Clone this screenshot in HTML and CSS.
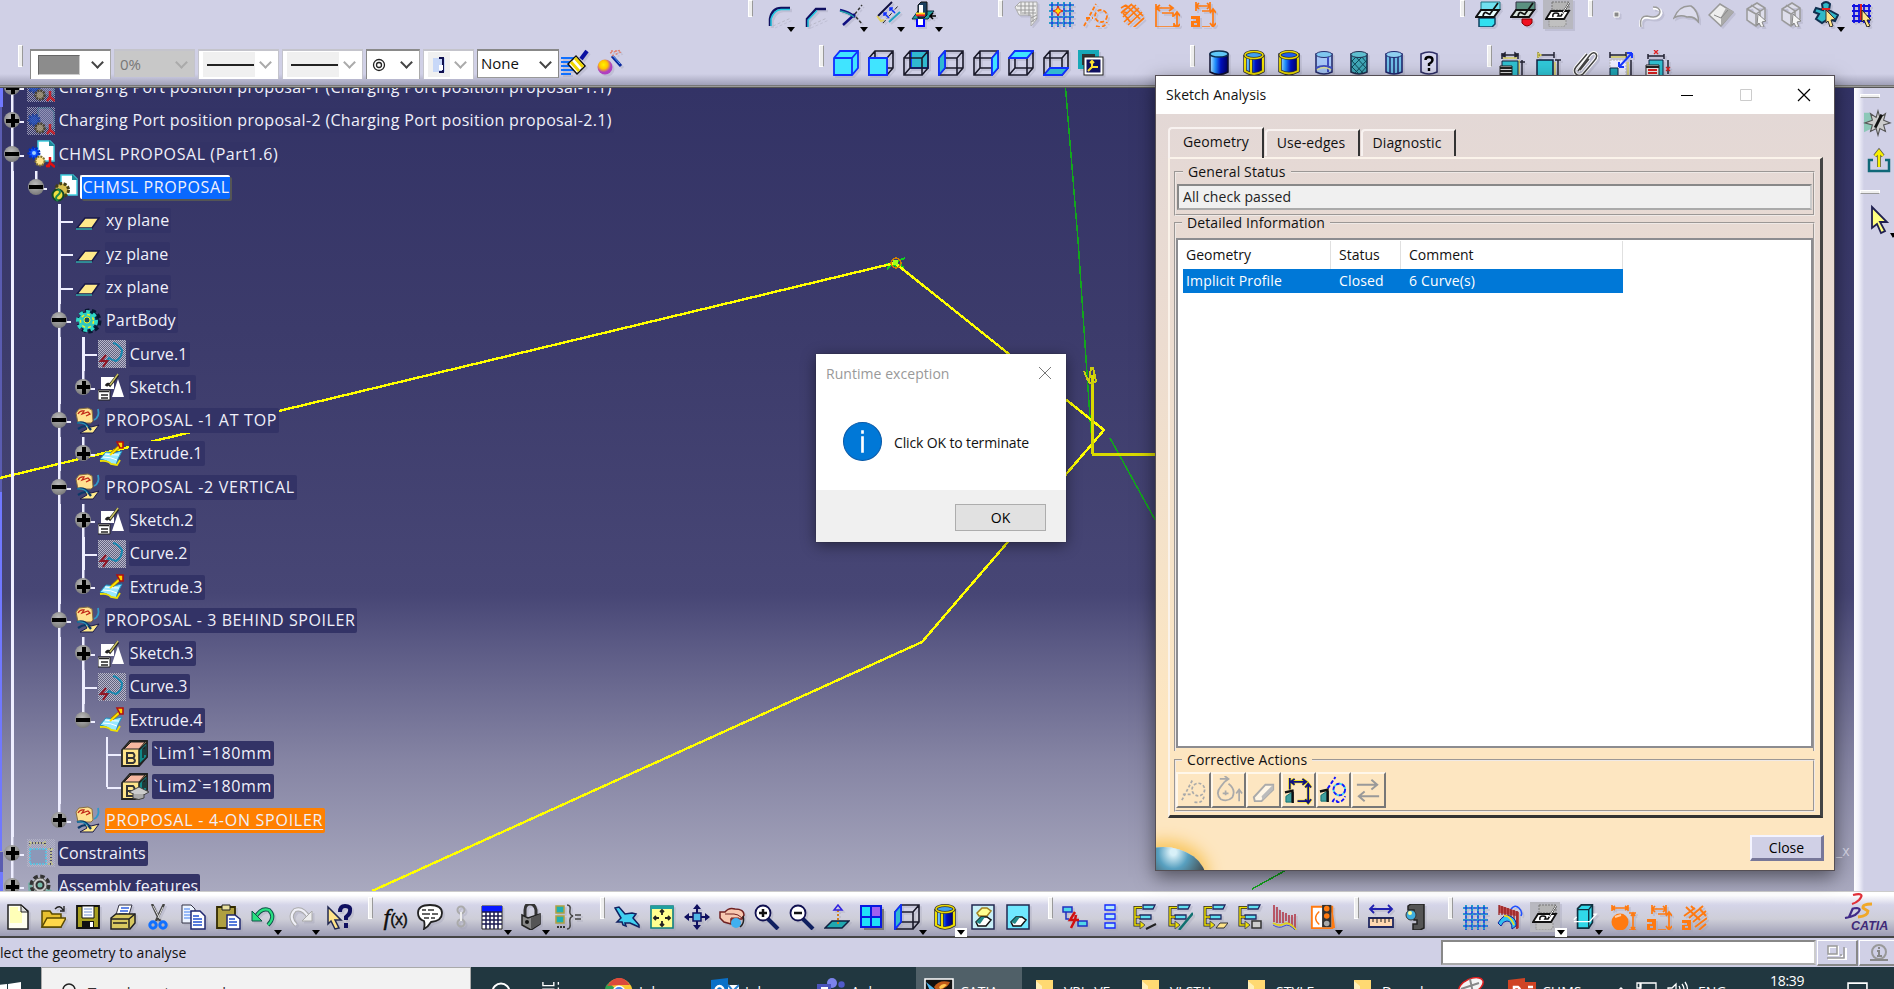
FILE: index.html
```html
<!DOCTYPE html>
<html lang="en">
<head>
<meta charset="utf-8">
<title>CATIA - Sketch Analysis</title>
<link rel="stylesheet" href="styles.css">
</head>
<body>
<svg class="defs" aria-hidden="true">
<defs>
<pattern id="dots" width="2" height="2" patternUnits="userSpaceOnUse"><rect width="1" height="1" fill="#b8b8cc"/><rect x="1" y="1" width="1" height="1" fill="#b8b8cc"/></pattern>
<linearGradient id="cylg"><stop offset="0" stop-color="#b8e8ff"/><stop offset=".3" stop-color="#2090ff"/><stop offset=".6" stop-color="#0010c0"/><stop offset="1" stop-color="#000060"/></linearGradient>
<radialGradient id="ball" cx=".4" cy=".35"><stop offset="0" stop-color="#fff200"/><stop offset=".55" stop-color="#ffc400"/><stop offset="1" stop-color="#b040c0"/></radialGradient>
</defs>
<symbol id="corner" viewBox="0 0 26 26"><path d="M3 25V18Q5 7 14 7H23" fill="none" stroke="#101060" stroke-width="2.500"/><path d="M4 25V18Q7 9 14 8.500H23" fill="none" stroke="#20c8e0" stroke-width="1.500"/><path d="M6 25l18-8" stroke="#b8b8c8" stroke-dasharray="3 2"/></symbol>
<symbol id="chamfer" viewBox="0 0 26 26"><path d="M4 26V18L13 8H23" fill="none" stroke="#101060" stroke-width="2.500"/><path d="M5 26V19L14 9.500" fill="none" stroke="#20c8e0" stroke-width="1.500"/><path d="M6 25l18-8" stroke="#b8b8c8" stroke-dasharray="3 2"/></symbol>
<symbol id="trim" viewBox="0 0 26 26"><path d="M1 9Q10 11 16 16M4 24L16 13" fill="none" stroke="#101080" stroke-width="2.500"/><path d="M1 10Q10 12 15 16" fill="none" stroke="#20a0a8" stroke-width="1.500"/><path d="M16 13L23 4M17 16l6 7" stroke="#333" stroke-dasharray="3 2" stroke-width="1.500"/></symbol>
<symbol id="mirror" viewBox="0 0 26 26"><path d="M3 15L17 1" stroke="#101040" stroke-width="2"/><path d="M14 21L25 11" stroke="#20a0c0" stroke-width="2"/><path d="M8 22L23 5" stroke="#222" stroke-dasharray="4 2 1 2"/><path d="M9 12l5 5M15 7l5 5M9 15v-3h3M15 10V7h3" fill="none" stroke="#1030ff" stroke-width="1.500"/><path d="M2 15l4 5 3-1" fill="none" stroke="#e0d060" stroke-width="2"/></symbol>
<symbol id="project" viewBox="0 0 26 26"><path d="M1 18l6-8h16l-6 8z" fill="#20a0a0" stroke="#103040"/><path d="M6 18v7h7v-7" fill="#fff" stroke="#00f" stroke-width="2"/><path d="M7 4l3-3h6v13l-3 3H7z" fill="#1a4060" stroke="#111"/><path d="M8 4h4v8H8z" fill="#fff"/><path d="M5 14h9" stroke="#f02020" stroke-width="2.500"/><path d="M5 12.500h9" stroke="#ffe020" stroke-width="1.800"/><path d="M25 15h-6m3-3l-3 3 3 3" fill="none" stroke="#000" stroke-width="1.500"/></symbol>
<symbol id="graygrid" viewBox="0 0 26 26"><path d="M2 6l5-5h17v17l-6 7v-11H6z" fill="#eee" stroke="#aaa"/><path d="M4 5h19M4 9h18M8 1v12M12 1v12M16 1v14M20 1v20M9 12h14M18 17l6-3M18 21l6-4" stroke="#999"/></symbol>
<symbol id="grid" viewBox="0 0 26 26"><path d="M4 1v25M10 1v25M16 1v25M22 1v25M1 4h25M1 10h25M1 16h25M1 22h25" stroke="#1848e0" stroke-width="1.700"/><path d="M4 1v25M10 1v25M16 1v25M22 1v25M1 4h25M1 10h25M1 16h25M1 22h25" stroke="#20b0c0" stroke-width="1.700" stroke-dasharray="1.500 3"/></symbol>
<symbol id="gridpoint" viewBox="0 0 26 26"><use href="#grid"/><path d="M10 5l1.500 3.500L15 10l-3.500 1.500L10 15l-1.500-3.500L5 10l3.500-1.500z" fill="#ffe000" stroke="#e02020"/></symbol>
<symbol id="constr" viewBox="0 0 26 26"><path d="M1 25L13 3M3 17h7M13 25q8 3 11-4" fill="none" stroke="#ff7a10" stroke-width="1.800" stroke-dasharray="4 2"/><circle cx="18" cy="15" r="6" fill="none" stroke="#ff7a10" stroke-width="1.800" stroke-dasharray="4 2"/></symbol>
<symbol id="hatch" viewBox="0 0 26 26"><path d="M2 7l5-3M2 12L13 3M4 16L17 4M5 21L20 7M9 24L23 11M14 27l11-10M7 4l14 14M3 10l5 2M13 4l11 11M4 12l8 10" fill="none" stroke="#ff7a10" stroke-width="1.700"/></symbol>
<symbol id="dimo" viewBox="0 0 26 26"><path d="M2 3v23h18v-4M2 7h16M6 4L2 7l4 3M15 4l4 3-4 3M8 12h11v4M23 12v14M20 15l3-4 3 4M20 23l3 4 3-4" fill="none" stroke="#ff7a10" stroke-width="1.700"/></symbol>
<symbol id="dimauto" viewBox="0 0 26 26"><path d="M6 1v9M20 1v9h-8M6 5h14M9 2L6 5l3 3M17 2l3 3-3 3M23 9v16M20 12l3-4 3 4M20 22l3 4 3-4M12 26h8" fill="none" stroke="#ff7a10" stroke-width="1.700"/><path d="M1 15h9v11H1v-6h5v-2H1zM4 22v2h3v-2z" fill="#ff7a10" fill-rule="evenodd"/></symbol>
<symbol id="hand" viewBox="0 0 26 26"><path d="M1 16h9v10H1v-5h5v-2H1zM4 22v2h3v-2z" fill="#ff7a10" fill-rule="evenodd"/><path d="M5 3l14 13M10 2l3 3M3 12L14 4M8 14L22 2M12 18L25 7M14 23l12-9M18 26l7-6M18 4l7 8" stroke="#ff7a10" stroke-width="1.900"/></symbol>
<symbol id="balldim" viewBox="0 0 26 26"><circle cx="9" cy="18" r="8.500" fill="#ff7a10"/><path d="M1 1v6M17 1v6M1 4h16M4 2L1 4l3 2M14 2l3 2-3 2M22 9v17M18 9h7M18 26h7M20 12l2-3 2 3M20 23l2 3 2-3" fill="none" stroke="#ff7a10" stroke-width="1.600"/><path d="M4 13l6-2" stroke="#ffd0a8" stroke-width="2"/></symbol>
<symbol id="sketchbox" viewBox="0 0 26 26"><path d="M4 17h16v6l-3 3H4z" fill="#30e0f0" stroke="#104060" stroke-width="1.500"/><path d="M6 1h19v8l-4 4H6z" fill="#70e0f0" stroke="#207080"/><path d="M1 16l5-7h18l-5 7z" fill="#e8ffff" stroke="#111" stroke-width="2"/><path d="M8 15q1-5 4-3t3 1l8-11" fill="none" stroke="#111" stroke-width="1.800"/></symbol>
<symbol id="sketchred" viewBox="0 0 26 26"><path d="M6 1h19v8l-4 4H6z" fill="#5a9080" stroke="#334"/><path d="M1 16l5-7h18l-5 7z" fill="#d8e4dc" stroke="#111" stroke-width="2"/><path d="M8 15q1-5 4-3t3 1l8-11" fill="none" stroke="#111" stroke-width="1.800"/><path d="M12 18h10v4q-5 6-10 0z" fill="#f01020" stroke="#800"/></symbol>
<symbol id="sketchgray" viewBox="0 0 26 26"><path d="M4 18h17v6l-3 2H4z" fill="#c0c0c0" stroke="#909090" stroke-dasharray="2 1"/><path d="M7 1h17v8H7z" fill="#b4b4b4" stroke="#777" stroke-dasharray="2 1"/><path d="M1 18l5-8h18l-5 8z" fill="#fff" stroke="#111" stroke-width="1.800"/><path d="M8 16q-1-4 3-4 4 0 2 3h3l8-13" fill="none" stroke="#111" stroke-width="1.600"/><path d="M17 13l7-11" stroke="#fff"/></symbol>
<symbol id="gpoint" viewBox="0 0 26 26"><path d="M11 11h5v5h-5z" fill="#888" stroke="#fff"/></symbol>
<symbol id="gcurve" viewBox="0 0 26 26"><path d="M3 26q-2-10 6-10 12 3 14-4 0-5-8-5" fill="none" stroke="#fff" stroke-width="3"/><path d="M3 26q-2-11 6-11 12 3 13-4 0-5-7-5" fill="none" stroke="#999" stroke-width="1.500"/></symbol>
<symbol id="garc" viewBox="0 0 26 26"><path d="M1 17Q6 4 18 5q7 4 8 17-4-7-12-6-7-3-13 1z" fill="#dcdcec" stroke="#999" stroke-width="1.500"/></symbol>
<symbol id="gsolid" viewBox="0 0 26 26"><path d="M1 14L12 3l13 8-12 14z" fill="#eee" stroke="#999" stroke-width="1.500"/><path d="M13 25l12-13v-2l-7-3-5 9z" fill="#aaa"/><path d="M6 14l7 3 7-8" fill="none" stroke="#888"/></symbol>
<symbol id="gcubes" viewBox="0 0 26 26"><path d="M4 8l10-6 8 5v11l-9 7-9-6zM4 8l9 5 9-6M13 13v12M8 4l9 6v12" fill="#dedeeb" stroke="#999" stroke-width="1.500"/><path d="M15 13l8 7-4 1 2 5-3 0-2-4-2 2z" fill="#f4f4f4" stroke="#888"/></symbol>
<symbol id="parts" viewBox="0 0 26 26"><path d="M9 3q4-4 8 0l-1 6 9 5-3 6-7-2-6 4-6-4 3-5-5-2 2-4 7 2z" fill="#30b8c8" stroke="#103050" stroke-width="2"/><path d="M9 8h8M13 9l5 6" stroke="#e02020" stroke-width="2"/><path d="M13 9l9 9-4 1 2 6-3 1-2-6-2 2z" fill="#ffe48a" stroke="#333"/></symbol>
<symbol id="gridcur" viewBox="0 0 26 26"><path d="M3 3v19M8 3v19M13 3v19M18 3v19M1 5h19M1 10h19M1 15h19M1 20h17" stroke="#1010e0" stroke-width="1.800"/><path d="M10 3v16" stroke="#e02020" stroke-width="2"/><path d="M11 9l9 10-4 0 3 6-3 1-3-7-2 2z" fill="#ffe48a" stroke="#222"/></symbol>
<symbol id="brush" viewBox="0 0 28 26"><path d="M0 8h16M0 12h16M0 16h14M0 20h13M0 24h10" stroke="#1070ff" stroke-width="2"/><path d="M7 14l8-8 9 10-8 8z" fill="#fff" stroke="#111" stroke-width="1.500"/><path d="M10 12l8 9M14 8l8 9" stroke="#f0d800" stroke-width="3"/><path d="M20 9l6-8" stroke="#0a10a0" stroke-width="4"/></symbol>
<symbol id="ballwand" viewBox="0 0 28 26"><circle cx="8" cy="17" r="7.500" fill="url(#ball)"/><path d="M15 6l9 10" stroke="#0828a0" stroke-width="3"/><path d="M16 6l7 8" stroke="#60a0f0" stroke-width="1"/><path d="M13 3l11-3M15 6l9-4M14 1h9" stroke="#e08070" stroke-width="1.300" stroke-dasharray="2 2"/></symbol>
<symbol id="wire" viewBox="0 0 26 26"><path d="M1 8h18v17H1zM1 8l6-7h18v17l-6 7M19 8l6-7M7 1v17h18M7 18l-6 7" fill="none" stroke="#1a1a2a" stroke-width="1.600"/></symbol>
<symbol id="c1" viewBox="0 0 26 26"><path d="M1 8l6-7h18v17l-6 7H1z" fill="#40e4ff" stroke="#1030ff" stroke-width="1.800"/><path d="M1 8h18v17M19 8l6-7" fill="none" stroke="#1030ff" stroke-width="1.800"/></symbol>
<symbol id="c2" viewBox="0 0 26 26"><use href="#wire"/><path d="M1 8h18v17H1z" fill="#40e4ff" stroke="#1030ff" stroke-width="1.800"/></symbol>
<symbol id="c3" viewBox="0 0 26 26"><path d="M8 1h17v17H8z" fill="#30b8d0" stroke="#1030ff" stroke-width="1.800"/><use href="#wire"/></symbol>
<symbol id="c4" viewBox="0 0 26 26"><use href="#wire"/><path d="M1 8l6-7v17l-6 7z" fill="#30b8d0" stroke="#1030ff" stroke-width="1.800"/></symbol>
<symbol id="c5" viewBox="0 0 26 26"><use href="#wire"/><path d="M19 8l6-7v17l-6 7z" fill="#40e4ff" stroke="#1030ff" stroke-width="1.800"/></symbol>
<symbol id="c6" viewBox="0 0 26 26"><use href="#wire"/><path d="M1 8l6-7h18l-6 7z" fill="#40e4ff" stroke="#1030ff" stroke-width="1.800"/></symbol>
<symbol id="c7" viewBox="0 0 26 26"><use href="#wire"/><path d="M1 25l6-7h18l-6 7z" fill="#30b8d0" stroke="#1030ff" stroke-width="1.800"/></symbol>
<symbol id="c8" viewBox="0 0 26 26"><path d="M2 2h17v15H2z" fill="#333" stroke="#18a8b8" stroke-width="4"/><rect x="6" y="7" width="19" height="18" fill="#fff" stroke="#222"/><rect x="8.500" y="9.500" width="14" height="13" fill="#101060"/><path d="M14 11v6h6M14 17l-4 4M12 13l2-2 2 2" fill="none" stroke="#ffe030" stroke-width="2"/></symbol>
<symbol id="y1" viewBox="0 0 26 26"><path d="M4 4v18q9 5 18 0V4z" fill="url(#cylg)" stroke="#101030" stroke-width="1.500"/><ellipse cx="13" cy="4" rx="9" ry="3" fill="#60c8f8" stroke="#103050" stroke-width="1.500"/></symbol>
<symbol id="y2" viewBox="0 0 26 26"><path d="M4 5v16q9 5 18 0V5z" fill="url(#cylg)"/><path d="M4 5v16q9 6 18 0V5M10 8v16" fill="none" stroke="#333" stroke-width="3.500"/><path d="M4 5v16q9 6 18 0V5M10 8v16" fill="none" stroke="#f0e000" stroke-width="2"/><ellipse cx="13" cy="5" rx="9" ry="3.500" fill="#40a0f0" stroke="#333" stroke-width="3"/><ellipse cx="13" cy="5" rx="9" ry="3.500" fill="none" stroke="#e8d800" stroke-width="1.500"/></symbol>
<symbol id="y3" viewBox="0 0 26 26"><path d="M4 5v16q9 5 18 0V5z" fill="url(#cylg)" stroke="#333" stroke-width="3.500"/><path d="M4 5v16q9 5 18 0V5z" fill="none" stroke="#f0e000" stroke-width="1.800"/><ellipse cx="13" cy="5" rx="9" ry="3.500" fill="#2060f0" stroke="#333" stroke-width="3"/><ellipse cx="13" cy="5" rx="9" ry="3.500" fill="none" stroke="#e8d800" stroke-width="1.500"/></symbol>
<symbol id="y4" viewBox="0 0 26 26"><path d="M5 4v18q8 4 16 0V4z" fill="#a8c8f8" stroke="#283070" stroke-width="1.600"/><ellipse cx="13" cy="4.500" rx="8" ry="3" fill="#80c8f0" stroke="#283070"/><path d="M17 7v15M5 18q8-4 16 0" fill="none" stroke="#4050c0" stroke-width="2"/><path d="M6 20q7-5 14 0" fill="none" stroke="#e0e090" stroke-width="1.500"/></symbol>
<symbol id="y5" viewBox="0 0 26 26"><path d="M5 4v18q8 4 16 0V4z" fill="#40a8b8" stroke="#203050" stroke-width="1.600"/><path d="M5 10l12 13M5 16l8 8M9 6l12 13M15 6l6 7M21 10L9 23M21 16l-7 8M17 6L5 18M11 6l-6 6" stroke="#104858"/><ellipse cx="13" cy="4.500" rx="8" ry="3" fill="#60c0d0" stroke="#203050"/></symbol>
<symbol id="y6" viewBox="0 0 26 26"><path d="M5 4v18q8 4 16 0V4z" fill="#70c0e8" stroke="#202870" stroke-width="1.600"/><path d="M9 7v16M13 7v17M17 7v16" stroke="#202870" stroke-width="1.500"/><ellipse cx="13" cy="4.500" rx="8" ry="3" fill="#90d0f0" stroke="#202870"/></symbol>
<symbol id="y7" viewBox="0 0 26 26"><path d="M5 4v18q8 4 16 0V4q-8-4-16 0z" fill="#d8d8f0" stroke="#303068" stroke-width="1.600"/><path d="M9.500 10q0-3 3.500-3t3.500 3q0 2-3.500 4v2M13 18v3" fill="none" stroke="#000" stroke-width="2.400"/></symbol>
<symbol id="t1" viewBox="0 0 26 26"><path d="M3 3v6M19 3v6M3 5h16M3 5l3-2v4zM19 5l-3-2v4zM23 10v16M20 12h6" stroke="#223" stroke-width="1.500"/><path d="M4 8h14M20 10v14" stroke="#d8d060" stroke-width="1.500"/><path d="M3 11h16v15H3z" fill="#30c0d0" stroke="#102040"/><path d="M1 16h12v10H1z" fill="#ddd" stroke="#222"/><path d="M1 18h12M1 21h12M1 24h12" stroke="#222" stroke-width="2"/></symbol>
<symbol id="t2" viewBox="0 0 26 26"><path d="M3 2v6M19 2v6M3 5h16M23 10v16M20 10h6" stroke="#223" stroke-width="1.500"/><path d="M3 3l3 2-3 2zM20 12v13" stroke="#d8d060" stroke-width="1.500"/><path d="M2 10h16v16H2z" fill="#30c8d8" stroke="#102040" stroke-width="1.500"/></symbol>
<symbol id="clip" viewBox="0 0 26 26"><path d="M6 21L18 5q4-4 6-1t-2 7L11 24q-4 3-7 0t0-7L15 4M8 20l9-11" fill="none" stroke="#fff" stroke-width="3.500"/><path d="M6 21L18 5q4-4 6-1t-2 7L11 24q-4 3-7 0t0-7L15 4M8 20l9-11" fill="none" stroke="#444" stroke-width="1.500"/></symbol>
<symbol id="t4" viewBox="0 0 26 26"><path d="M2 2v6M18 2v6M2 5h16M23 10v16" stroke="#223" stroke-width="1.500"/><path d="M3 7h15M20 12v13" stroke="#d8d060" stroke-width="1.500"/><path d="M2 10h16v16H2z" fill="#eef" stroke="#bbb" stroke-dasharray="2 1"/><path d="M2 18h8v8H2z" fill="#20a8b8" stroke="#102040"/><path d="M11 17L24 3m0 0h-5m5 0v5M11 17v-5m0 5h5" fill="none" stroke="#1838ff" stroke-width="2"/></symbol>
<symbol id="t5" viewBox="0 0 26 26"><path d="M3 4v5M19 4v5M3 6h16M23 10v14" stroke="#223" stroke-width="1.500"/><path d="M9 0l4 4m0-4L9 4M21 17l4 4m0-4l-4 4" stroke="#e02020" stroke-width="1.300"/><path d="M4 10h14v16H4z" fill="#30c0d0" stroke="#102040"/><path d="M1 15h13v11H1z" fill="#eee" stroke="#222"/><path d="M1 17h13" stroke="#222" stroke-width="2"/><path d="M3 20h9M3 23h9" stroke="#e02020" stroke-width="1.800"/></symbol>
<symbol id="new" viewBox="0 0 26 26"><path d="M3 1h13l7 6v18H3z" fill="#fffff0" stroke="#222" stroke-width="1.500"/><path d="M5 3h8v4h4v12H5z" fill="#ffffb8"/><path d="M16 1v7h7z" fill="#ddd" stroke="#222"/></symbol>
<symbol id="open" viewBox="0 0 26 26"><path d="M2 23V7h8l2 3h9v13z" fill="#e8c030" stroke="#5a4a00" stroke-width="1.500"/><path d="M2 23l5-9h19l-5 9z" fill="#ffd84a" stroke="#5a4a00" stroke-width="1.500"/><path d="M15 5q5-5 8 1m1-4v5h-4" fill="none" stroke="#222" stroke-width="1.400"/></symbol>
<symbol id="save" viewBox="0 0 26 26"><path d="M2 2h22v22H2z" fill="#a8a020" stroke="#111" stroke-width="1.800"/><path d="M7 2h12v12H7z" fill="#fff" stroke="#111"/><path d="M9 5h8M9 8h8M9 11h8" stroke="#7090d0"/><path d="M7 17h12v7H7z" fill="#111"/><path d="M15 18h3v5h-3z" fill="#fff"/></symbol>
<symbol id="print" viewBox="0 0 26 26"><path d="M9 1h13l-4 13H5z" fill="#fff" stroke="#334"/><path d="M11 4h8M10 7h8M9 10h8" stroke="#3060e0" stroke-width="1.500"/><path d="M1 14l5-4h19v9l-5 6H1z" fill="#d8c860" stroke="#222" stroke-width="1.500"/><path d="M1 15h18v9M19 15l6-5M3 19h14" fill="none" stroke="#222" stroke-width="1.500"/></symbol>
<symbol id="cut" viewBox="0 0 26 26"><path d="M7 0l8 17M19 0l-8 17" stroke="#444" stroke-width="2.500"/><path d="M8 2l7 13M18 3l-5 11" stroke="#ddd"/><circle cx="8" cy="21" r="3.200" fill="none" stroke="#1070ff" stroke-width="3"/><circle cx="18" cy="21" r="3.200" fill="none" stroke="#1070ff" stroke-width="3"/></symbol>
<symbol id="copy" viewBox="0 0 26 26"><path d="M2 1h9l4 4v14H2z" fill="#eef4ff" stroke="#334"/><path d="M4 5h6M4 8h8M4 11h8M4 14h8" stroke="#4080f0"/><path d="M11 7h9l5 5v13H11z" fill="#fff" stroke="#202870" stroke-width="1.500"/><path d="M13 12h6M13 15h9M13 18h9M13 21h9" stroke="#2050d0" stroke-width="1.300"/></symbol>
<symbol id="paste" viewBox="0 0 26 26"><path d="M2 3h18v21H2z" fill="#b0a040" stroke="#332b00" stroke-width="1.800"/><path d="M7 1h8v5H7z" fill="#e8e0a0" stroke="#222"/><path d="M12 11h8l5 4v10H12z" fill="#fff" stroke="#202870" stroke-width="1.500"/><path d="M14 15h6M14 18h8M14 21h8" stroke="#2050d0" stroke-width="1.300"/></symbol>
<symbol id="undo" viewBox="0 0 26 26"><path d="M5 14Q11 3 19 6q7 7-1 15" fill="none" stroke="#105048" stroke-width="4"/><path d="M5 14Q11 3 19 6q7 7-1 15" fill="none" stroke="#28e080" stroke-width="2.200"/><path d="M2 7v10h10z" fill="#28e080" stroke="#105048"/></symbol>
<symbol id="redo" viewBox="0 0 26 26"><path d="M21 14Q15 3 7 6q-7 7 1 15" fill="none" stroke="#aaa" stroke-width="4"/><path d="M21 14Q15 3 7 6q-7 7 1 15" fill="none" stroke="#f0f0f8" stroke-width="2.200"/><path d="M24 7v10H14z" fill="#eee" stroke="#aaa"/></symbol>
<symbol id="help" viewBox="0 0 26 26"><path d="M2 3l13 13h-6l4 8-4 1-4-8-3 3z" fill="#ffe48a" stroke="#222850" stroke-width="1.500"/><path d="M14 8q0-6 5-6 6 0 5 5 0 3-4 6v3M20 19v5" fill="none" stroke="#101060" stroke-width="4"/></symbol>
<symbol id="bubble" viewBox="0 0 26 26"><path d="M13 1q12 0 12 8t-11 9q-3 5-7 7 1-5 0-8-6-2-6-8 0-8 12-8z" fill="#fff" stroke="#222" stroke-width="1.800"/><path d="M5 6h4m2 0h6M5 10h8m2 0h6M7 14h5m2 0h4" stroke="#333" stroke-width="1.600"/></symbol>
<symbol id="chain" viewBox="0 0 26 26"><circle cx="13" cy="6" r="3.500" fill="none" stroke="#aaa" stroke-width="2"/><circle cx="13" cy="19" r="3.500" fill="none" stroke="#aaa" stroke-width="2"/><path d="M13 8v9" stroke="#eee" stroke-width="2"/></symbol>
<symbol id="table" viewBox="0 0 26 26"><path d="M3 2h20v23H3z" fill="#fff" stroke="#222"/><path d="M3 2h20v6H3z" fill="#0818ff"/><path d="M7 8v17M11 8v17M15 8v17M19 8v17M3 8h20M3 12h20M3 16h20M3 20h20" stroke="#1a1a50" stroke-width="1.500"/></symbol>
<symbol id="lock" viewBox="0 0 26 26"><path d="M8 12V6q0-6 5-6t6 6v5" fill="none" stroke="#333" stroke-width="3"/><path d="M5 11l6 3 12-4v10l-9 6-9-5z" fill="#888" stroke="#222" stroke-width="1.500"/><path d="M14 14v11l9-5V10z" fill="#555"/><circle cx="10" cy="18" r="2" fill="#111"/></symbol>
<symbol id="brace" viewBox="0 0 26 26"><path d="M1 2h8v7H1zM1 12h8v7H1z" fill="#20b0b0" stroke="#b0a040" stroke-width="1.500"/><path d="M2 23h8" stroke="#333" stroke-dasharray="2 1" stroke-width="2"/><path d="M12 1q4 0 3 5t3 6q-4 1-3 7t-3 6M20 11h6M20 15h6" fill="none" stroke="#444" stroke-width="1.500"/></symbol>
<symbol id="plane3d" viewBox="0 0 26 26"><path d="M1 4l4-1 6 7 7-1 4 1-3 4 6 7v2l-9-4-5 0 1 3-3-1-1-3-5 0 4-4z" fill="#40d0f0" stroke="#102060" stroke-width="1.500"/></symbol>
<symbol id="fit" viewBox="0 0 26 26"><path d="M2 2h22v22H2z" fill="#ffff90" stroke="#108080" stroke-width="1.600"/><path d="M2 2h22v3H2z" fill="#20a0a0"/><path d="M13 6v5m-2-3l2-2 2 2M13 22v-5m-2 3l2 2 2-2M5 14h5M7 12l-2 2 2 2M21 14h-5m3-2l2 2-2 2" fill="none" stroke="#222" stroke-width="1.800"/></symbol>
<symbol id="pan" viewBox="0 0 26 26"><path d="M13 1v24M1 13h24" stroke="#101060" stroke-width="2"/><path d="M13 0l4 5H9zM13 26l4-5H9zM0 13l5-4v8zM26 13l-5-4v8z" fill="#101060"/><path d="M9 9h8v8H9z" fill="#50b8e8" stroke="#101060" stroke-width="1.500"/></symbol>
<symbol id="rotate" viewBox="0 0 26 26"><path d="M1 8h5q4-5 10-3 9 0 9 6l-2 4H12v5l-7-2-4-4z" fill="#f8c8b0" stroke="#702020" stroke-width="1.500"/><path d="M6 10h9q4 0 8 4M12 14h8" fill="none" stroke="#702020"/><circle cx="17" cy="19" r="5" fill="#40b0f0"/><path d="M24 12q2 7-3 11" fill="none" stroke="#222" stroke-width="1.500"/></symbol>
<symbol id="zin" viewBox="0 0 26 26"><path d="M14 15l10 10" stroke="#102060" stroke-width="4"/><circle cx="9" cy="9" r="7.500" fill="#fff" stroke="#101050" stroke-width="1.800"/><path d="M9 5v8M5 9h8" stroke="#111" stroke-width="2.500"/></symbol>
<symbol id="zout" viewBox="0 0 26 26"><path d="M14 15l10 10" stroke="#102060" stroke-width="4"/><circle cx="9" cy="9" r="7.500" fill="#fff" stroke="#101050" stroke-width="1.800"/><path d="M5 9h8" stroke="#111" stroke-width="2.500"/></symbol>
<symbol id="normal" viewBox="0 0 26 26"><path d="M1 24l7-7h17l-7 7z" fill="#20a8b0" stroke="#102040" stroke-width="1.500"/><path d="M14 20V4" stroke="#d08020" stroke-width="2" stroke-dasharray="2 2"/><path d="M14 1l-4 5h8z" fill="none" stroke="#3020e0" stroke-width="1.500"/></symbol>
<symbol id="multi" viewBox="0 0 26 26"><path d="M5 5h20v21H5z" fill="#777"/><path d="M2 2h20v21H2z" fill="#20e0f8" stroke="#0818e0" stroke-width="2"/><path d="M12 3h9v9h-9z" fill="#a060f0"/><path d="M12 2v21M2 13h20" stroke="#0818e0" stroke-width="2"/></symbol>
<symbol id="hide" viewBox="0 0 26 26"><path d="M2 1h22v24H2z" fill="#c8f0f8" stroke="#222850" stroke-width="1.500"/><path d="M7 9l5-5h5l4 3-4 5H9z" fill="#ffff90" stroke="#a08020" stroke-width="1.500"/><path d="M6 18l5-5h6l4 3-5 6H8z" fill="#fff" stroke="#111" stroke-width="1.500"/><path d="M6 18l5-5h4l-5 7z" fill="#208888"/></symbol>
<symbol id="swap" viewBox="0 0 26 26"><path d="M2 1h22v24H2z" fill="#70e8ff" stroke="#222850" stroke-width="1.500"/><path d="M6 18l5-5h6l4 3-5 6H8z" fill="#fff" stroke="#111" stroke-width="1.500"/><path d="M6 18l5-5h4l-5 7z" fill="#208888"/></symbol>
<symbol id="flash" viewBox="0 0 26 26"><path d="M1 3h9v5H1zM16 17h9v5h-9z" fill="#50d8e8" stroke="#2030c0" stroke-width="1.500"/><path d="M4 8v7h3" fill="none" stroke="#2030c0" stroke-width="1.500"/><path d="M13 8l-5 8h5l-4 8M14 11l-1 5h4" fill="none" stroke="#d01010" stroke-width="2.500"/></symbol>
<symbol id="stack" viewBox="0 0 26 26"><path d="M8 1h10v5H8zM8 10h10v5H8zM8 19h10v5H8z" fill="#b8e8f8" stroke="#1028ff" stroke-width="1.300"/></symbol>
<symbol id="flow" viewBox="0 0 26 26"><path d="M11 1h12l-2 4H11zM8 11h11v4H8z" fill="#60e0f0" stroke="#202860" stroke-width="1.300"/><path d="M10 3.500H3V21h6M3 13h5" fill="none" stroke="#222" stroke-width="3"/><path d="M10 3.500H3V21h6M3 13h5" fill="none" stroke="#f0e000" stroke-width="1.500"/><path d="M8 17l5 4-5 4z" fill="#f0e000" stroke="#555"/></symbol>
<symbol id="flow1" viewBox="0 0 26 26"><use href="#flow"/><path d="M14 25l10-5" stroke="#222" stroke-width="2"/></symbol>
<symbol id="flow2" viewBox="0 0 26 26"><use href="#flow"/><path d="M12 26l14-17" stroke="#107070" stroke-width="2.500"/></symbol>
<symbol id="flow3" viewBox="0 0 26 26"><use href="#flow"/><path d="M14 24l4-5h8l-4 5z" fill="#ffe48a" stroke="#333"/></symbol>
<symbol id="flow4" viewBox="0 0 26 26"><use href="#flow"/><path d="M15 17h9v7h-9z" fill="#ccc" stroke="#333" stroke-width="1.500"/></symbol>
<symbol id="comb" viewBox="0 0 26 26"><path d="M2 1v17M5 3v16M8 6v13M11 8v11M14 9v8M17 11v8M20 11v11M23 10v14" stroke="#b03040" stroke-width="1.500"/><path d="M1 19q6 4 11 1t12 6" fill="none" stroke="#e0d020" stroke-width="2"/><path d="M1 21q6 4 11 1t12 5" fill="none" stroke="#4050d0"/></symbol>
<symbol id="light" viewBox="0 0 26 28"><path d="M1 3h22v23H1zM22 3l3 23" fill="#fff" stroke="#ff7a10" stroke-width="2"/><path d="M9 8q-8 7 0 14" fill="none" stroke="#ff7a10" stroke-width="1.500"/><path d="M12 1h10v24H12z" fill="#333"/><circle cx="17" cy="5" r="3" fill="#ff7a10"/><circle cx="17" cy="13" r="3" fill="#ff7a10"/><circle cx="17" cy="21" r="3" fill="#aaa"/></symbol>
<symbol id="ruler" viewBox="0 0 26 26"><path d="M2 5h22M6 1L2 5l4 4M20 1l4 4-4 4" fill="none" stroke="#2020b0" stroke-width="1.800"/><path d="M1 14h24v9H1z" fill="#ffd8b0" stroke="#202860" stroke-width="1.800"/><path d="M5 14v4M9 14v5M13 14v4M17 14v5M21 14v4" stroke="#222"/></symbol>
<symbol id="caliper" viewBox="0 0 26 26"><path d="M5 2l3-2h13v24l-4 2h-7v-6h4v-4h-3V6H5z" fill="#555" stroke="#222" stroke-width="1.500"/><circle cx="8" cy="11" r="5" fill="#40b0e0" stroke="#333"/><circle cx="7" cy="9" r="2" fill="#ffff90"/></symbol>
<symbol id="analysis" viewBox="0 0 26 26"><path d="M2 1l20 7v16l-3 1V12L2 9z" fill="#c05050"/><path d="M2 1v10M5 2v9M8 3v9M11 4v9M14 5v9M17 6v10M20 7v18" stroke="#901818" stroke-width="1.200"/><path d="M14 5q4-5 8-1t2 8" fill="none" stroke="#2050ff" stroke-width="1.600"/><path d="M1 19q6-10 12-7 7 3 6 10l-4 3q0-8-5-8-4 0-6 5z" fill="#30c0f0" stroke="#1020a0"/><path d="M7 12q6-1 10 9" stroke="#f0e020" fill="none" stroke-width="1.800"/></symbol>
<symbol id="prism" viewBox="0 0 26 28"><path d="M5 5l4-4h12v19l-4 6H5z" fill="#30d8e8" stroke="#103040" stroke-width="1.800"/><path d="M5 6h12v20M17 6l4-5" fill="none" stroke="#103040" stroke-width="1.500"/><path d="M1 17l3-3M1 19h17l7-8h-3" fill="none" stroke="#fff" stroke-width="1.500"/></symbol>
<symbol id="asm" viewBox="0 0 28 28"><path d="M11 1h12l4 4v16H11z" fill="#fff" stroke="#40d0e0" stroke-width="1.500"/><path d="M22 0v6h6z" fill="#208898"/><circle cx="7" cy="13" r="5" fill="#1050ff" stroke="#0030c0" stroke-width="3" stroke-dasharray="2 1.500"/><circle cx="7" cy="13" r="2" fill="#a0d0ff"/><circle cx="13" cy="21" r="4.500" fill="#ffe48a" stroke="#807030" stroke-width="2" stroke-dasharray="2 1"/><path d="M20 27l3-4v-6m0 6l5 4m-9-1h4" fill="none" stroke="#e01010" stroke-width="2.500"/></symbol>
<symbol id="asmd" viewBox="0 0 28 28"><rect width="28" height="28" fill="url(#dots)" opacity=".75"/><g opacity=".75"><path d="M11 1h12l4 4v16H11z" fill="#8c90b8" stroke="#308898" opacity=".7"/><circle cx="7" cy="13" r="5" fill="#2050c0" stroke="#1038a0" stroke-width="3" stroke-dasharray="2 1.500"/><circle cx="13" cy="21" r="4.500" fill="#a89a70" stroke="#403818" stroke-width="2.500" stroke-dasharray="2 1"/><path d="M20 27l3-4v-6m0 6l5 4" fill="none" stroke="#e01010" stroke-width="2.500"/></g></symbol>
<symbol id="part" viewBox="0 0 28 28"><path d="M11 1h12l4 4v16H11z" fill="#fff" stroke="#40d0e0" stroke-width="1.500"/><path d="M22 0v6h6z" fill="#208898"/><circle cx="12" cy="16" r="6.500" fill="#d8c050" stroke="#444018" stroke-width="3" stroke-dasharray="3 1.500"/><circle cx="8" cy="21" r="5.500" fill="#f0e040" stroke="#104828" stroke-width="2"/><path d="M8 15q4 3 0 6t0 6" fill="none" stroke="#208848" stroke-width="2"/></symbol>
<symbol id="pl" viewBox="0 0 28 28"><path d="M3 21l8-10h14l-7 10z" fill="#ffe98a" stroke="#181848" stroke-width="1.500"/><path d="M2 22h16" stroke="#30a8a8" stroke-width="1.500"/></symbol>
<symbol id="body" viewBox="0 0 28 28"><circle cx="15" cy="14" r="10.500" fill="#0a2848" stroke="#061830" stroke-width="4" stroke-dasharray="4 2.500"/><circle cx="13" cy="14" r="8.500" fill="#30c8c0" stroke="#30d8c8" stroke-width="5" stroke-dasharray="3.500 3"/><circle cx="13" cy="14" r="6.500" fill="none" stroke="#f0f020" stroke-width="1.500" stroke-dasharray="3 3"/><circle cx="13" cy="13" r="3" fill="#105060" stroke="#f0f020"/></symbol>
<symbol id="curve" viewBox="0 0 28 28"><rect width="28" height="28" fill="#62627f"/><rect width="28" height="28" fill="url(#dots)"/><path d="M15 3q5 1 9 7 0 8-6 11-4-1-7-3l-2 4" fill="none" stroke="#1888b0" stroke-width="2"/><path d="M8 15l-5 6 6 0-4 6" fill="none" stroke="#901828" stroke-width="2.200"/></symbol>
<symbol id="sketch" viewBox="0 0 28 28"><path d="M3 4h13v12H3z" fill="#fff"/><path d="M20 6l6 18H14z" fill="#fff"/><path d="M8 13q2-3 4-1l8-10" fill="none" stroke="#222" stroke-width="3"/><path d="M12 12L20 1" stroke="#c8c060" stroke-width="1.500"/><path d="M0 17h12v10H0z" fill="#fff" stroke="#222"/><path d="M1 18.500h10M3 22h7M3 25h7" stroke="#222" stroke-width="1.500"/></symbol>
<symbol id="geo" viewBox="0 0 28 28"><path d="M2 6l3-4 9-1 4 2 1 11-2 2H4z" fill="#ffe090" stroke="#8a7040"/><path d="M4 7q2-4 6-3l-2 3 6-2 2 2-4 2" fill="none" stroke="#c02818" stroke-width="1.300"/><path d="M20 13q6-3 4-11" fill="none" stroke="#3098c8" stroke-width="1.800"/><path d="M10 17l7 3 8-2-6 8H6l7-4z" fill="#ffe98a" stroke="#181848"/><path d="M3 16q7-2 11 3l3 4M4 22q4-3 8-3" fill="none" stroke="#0c3868" stroke-width="2.200"/><path d="M3 16q7-1 11 4" fill="none" stroke="#2890b8" stroke-width="1.200"/></symbol>
<symbol id="extrude" viewBox="0 0 28 28"><path d="M2 19l6-7q8 2 16-1l-4 8-2 6-5-1q-4-4-11-5z" fill="#98e8ff" stroke="#2090c0"/><path d="M2 21q8-1 11 3l6 1 3-5" fill="none" stroke="#f0e000" stroke-width="1.800"/><path d="M5 17q8 0 14 3M7 14q7 1 14 1" fill="none" stroke="#fff"/><path d="M14 13l8-7" stroke="#a07800" stroke-width="3.500"/><path d="M12 15l10-9" stroke="#ffe000" stroke-width="2"/><path d="M19 2h6v6h-3z" fill="#ffd000" stroke="#b01010" stroke-width="1.600"/></symbol>
<symbol id="lim" viewBox="0 0 28 28"><path d="M1 10l8-9h17v16l-8 9H1z" fill="#ffe48a" stroke="#222" stroke-width="1.800"/><path d="M3 9l7-7h14l-6 7z" fill="#f8b8a0" stroke="#222"/><path d="M18 10l8-8v15l-8 8z" fill="#108888" stroke="#222" stroke-width="1.500"/><path d="M6 13h6q3 3 0 5 4 3 0 5H6zM6 18h6" fill="none" stroke="#333" stroke-width="2"/><path d="M22 18V9l2-2v8" fill="none" stroke="#222" stroke-width="1.500"/></symbol>
<symbol id="limcap" viewBox="0 0 28 28"><use href="#lim"/><path d="M8 19l10-5 10 5-9 5z" fill="#ccc" stroke="#444"/><path d="M12 21v4q6 3 11 0v-4" fill="#aaa" stroke="#444"/></symbol>
<symbol id="cons" viewBox="0 0 28 28"><rect width="28" height="28" fill="url(#dots)" opacity=".8"/><path d="M3 10h16v15H3z" fill="#8c98b8" stroke="#50c8e8" stroke-width="1.500" stroke-dasharray="2 1"/><path d="M3 2v5M18 2v5M3 4h15M21 10h5M21 25h5M24 10v15" stroke="#303050" stroke-width="1.500"/><path d="M3 2v5M18 2v5M3 4h15M21 10h5M21 25h5M24 10v15" stroke="#e0e0a0" stroke-width="1.500" stroke-dasharray="2 1"/></symbol>
<symbol id="gear" viewBox="0 0 28 28"><path d="M1 10l9-4 18 14v8H2z" fill="#78b0a8"/><circle cx="13" cy="12" r="8" fill="#ccc" stroke="#333" stroke-width="5" stroke-dasharray="4 2.280"/><circle cx="13" cy="12" r="7" fill="#c8c8c8" stroke="#555"/><circle cx="13" cy="12" r="3.500" fill="#7ba" stroke="#333" stroke-width="2"/></symbol>
<symbol id="fold" viewBox="0 0 17 23"><path d="M0 0h17v23H0z" fill="#ffd972"/><path d="M0 1l6 5v17H0z" fill="#fff0b8"/></symbol>
</svg>

<header class="tools">
 <div class="bar row1">
  <div></div>
  <div class="grp"><svg><use href="#corner"/></svg><svg><use href="#chamfer"/></svg><svg><use href="#trim"/></svg><svg><use href="#mirror"/></svg><svg><use href="#project"/></svg>
   <i class="arr"></i><i class="arr a2"></i><i class="arr a3"></i><i class="arr a4"></i></div>
  <div class="grp"><svg><use href="#graygrid"/></svg><svg><use href="#gridpoint"/></svg><svg><use href="#constr"/></svg><svg><use href="#hatch"/></svg><svg><use href="#dimo"/></svg><svg><use href="#dimauto"/></svg></div>
  <div class="grp"><svg><use href="#sketchbox"/></svg><svg><use href="#sketchred"/></svg><svg class="on"><use href="#sketchgray"/></svg></div>
  <div class="grp"><svg><use href="#gpoint"/></svg><svg><use href="#gcurve"/></svg><svg><use href="#garc"/></svg><svg><use href="#gsolid"/></svg><svg><use href="#gcubes"/></svg><svg><use href="#gcubes"/></svg><span class="drop"><svg><use href="#parts"/></svg></span><svg><use href="#gridcur"/></svg></div>
 </div>
 <div class="bar row2">
  <div></div>
  <div class="grp props">
   <span class="combo w81"><b class="swatch"></b></span>
   <span class="combo w81 off">0%</span>
   <span class="combo w81 dim"><b class="line"></b></span>
   <span class="combo w81 dim"><b class="line"></b></span>
   <span class="combo w54"><svg class="pt" viewBox="0 0 14 14"><circle cx="7" cy="7" r="5.500"/><circle cx="7" cy="7" r="2.500"/></svg></span>
   <span class="combo w51 dim"><svg class="lay" viewBox="0 0 18 18"><path d="M2 2h12v14H2z" fill="#c8d8f8"/><path d="M8 2h4v14H8" fill="none" stroke="#101050" stroke-width="2"/><path d="M8 9h4v5H8z" fill="#fff"/></svg></span>
   <span class="combo w82 none">None</span>
   <svg class="wide"><use href="#brush"/></svg><svg class="wide"><use href="#ballwand"/></svg>
  </div>
  <div class="grp"><svg><use href="#c1"/></svg><svg><use href="#c2"/></svg><svg><use href="#c3"/></svg><svg><use href="#c4"/></svg><svg><use href="#c5"/></svg><svg><use href="#c6"/></svg><svg><use href="#c7"/></svg><svg><use href="#c8"/></svg></div>
  <div class="grp"><svg><use href="#y1"/></svg><svg><use href="#y2"/></svg><svg><use href="#y3"/></svg><svg><use href="#y4"/></svg><svg><use href="#y5"/></svg><svg><use href="#y6"/></svg><svg><use href="#y7"/></svg></div>
  <div class="grp"><svg><use href="#t1"/></svg><svg><use href="#t2"/></svg><svg><use href="#clip"/></svg><svg><use href="#t4"/></svg><svg><use href="#t5"/></svg></div>
 </div>
</header>

<main class="work">
 <div class="view">
  <svg class="scene" viewBox="0 0 1854 803" shape-rendering="crispEdges">
   <path d="M0 0h3v19H0z" fill="#7078ff"/><path d="M0 19h2v385H0zM0 764h3v20H0z" fill="#5a5cb0"/><path d="M0 404h2v359H0zM0 784h3v19H0z" fill="#7078ff"/>
   <g fill="none" stroke="#12a81c" stroke-width="1.500"><path d="M1065.500 0L1078 152 1091 345M1110 350L1158 437M1252 801L1290 780"/><path d="M887 181l8-7 10-4M886 176l18 3M888 177h14" stroke="#10d020" stroke-width="2"/></g>
   <g fill="none" stroke="#ff0" stroke-width="2.400"><path d="M0 390L895 175 1104 342 922 554 372 803"/></g>
   <circle cx="896" cy="175" r="5" fill="none" stroke="#d08000" stroke-width="1.500"/><path d="M893 172h5v5h-5z" fill="#a0ff20"/>
   <path d="M1092 366V287M1092 366h66" fill="none" stroke="#dada00" stroke-width="3"/><path d="M1089 294l2-14h2l3 13-4 3zM1084 283l4 10" fill="none" stroke="#cccc10" stroke-width="2"/>
  </svg>
  <ul class="tree">
   <li><i class="t b p"></i><svg><use href="#asmd"/></svg><span class="wd">Charging Port position proposal-1 (Charging Port position proposal-1.1)</span></li>
   <li><i class="t b p"></i><svg><use href="#asmd"/></svg><span class="wd">Charging Port position proposal-2 (Charging Port position proposal-2.1)</span></li>
   <li><i class="t b"></i><svg><use href="#asm"/></svg><span class="caps">CHMSL PROPOSAL (Part1.6)</span></li>
   <li><i class="v"></i><i class="l b"></i><svg><use href="#part"/></svg><span class="sel">CHMSL PROPOSAL</span></li>
   <li><i class="v"></i><i></i><i class="t"></i><svg><use href="#pl"/></svg><span>xy plane</span></li>
   <li><i class="v"></i><i></i><i class="t"></i><svg><use href="#pl"/></svg><span>yz plane</span></li>
   <li><i class="v"></i><i></i><i class="t"></i><svg><use href="#pl"/></svg><span>zx plane</span></li>
   <li><i class="v"></i><i></i><i class="t b"></i><svg><use href="#body"/></svg><span>PartBody</span></li>
   <li><i class="v"></i><i></i><i class="v"></i><i class="t"></i><svg><use href="#curve"/></svg><span>Curve.1</span></li>
   <li><i class="v"></i><i></i><i class="v"></i><i class="l b p"></i><svg><use href="#sketch"/></svg><span>Sketch.1</span></li>
   <li><i class="v"></i><i></i><i class="t b"></i><svg><use href="#geo"/></svg><span class="caps c2">PROPOSAL -1 AT TOP</span></li>
   <li><i class="v"></i><i></i><i class="v"></i><i class="l b p"></i><svg><use href="#extrude"/></svg><span>Extrude.1</span></li>
   <li><i class="v"></i><i></i><i class="t b"></i><svg><use href="#geo"/></svg><span class="caps c2">PROPOSAL -2 VERTICAL</span></li>
   <li><i class="v"></i><i></i><i class="v"></i><i class="t b p"></i><svg><use href="#sketch"/></svg><span>Sketch.2</span></li>
   <li><i class="v"></i><i></i><i class="v"></i><i class="t"></i><svg><use href="#curve"/></svg><span>Curve.2</span></li>
   <li><i class="v"></i><i></i><i class="v"></i><i class="l b p"></i><svg><use href="#extrude"/></svg><span>Extrude.3</span></li>
   <li><i class="v"></i><i></i><i class="t b"></i><svg><use href="#geo"/></svg><span class="caps">PROPOSAL - 3 BEHIND SPOILER</span></li>
   <li><i class="v"></i><i></i><i class="v"></i><i class="t b p"></i><svg><use href="#sketch"/></svg><span>Sketch.3</span></li>
   <li><i class="v"></i><i></i><i class="v"></i><i class="t"></i><svg><use href="#curve"/></svg><span>Curve.3</span></li>
   <li><i class="v"></i><i></i><i class="v"></i><i class="l b"></i><svg><use href="#extrude"/></svg><span>Extrude.4</span></li>
   <li><i class="v"></i><i></i><i class="v"></i><i></i><i class="t"></i><svg><use href="#lim"/></svg><span class="caps">`Lim1`=180mm</span></li>
   <li><i class="v"></i><i></i><i class="v"></i><i></i><i class="l"></i><svg><use href="#limcap"/></svg><span class="caps">`Lim2`=180mm</span></li>
   <li><i class="v"></i><i></i><i class="l b p"></i><svg><use href="#geo"/></svg><span class="caps c2 hot">PROPOSAL - 4-ON SPOILER</span></li>
   <li><i class="t b p"></i><svg><use href="#cons"/></svg><span>Constraints</span></li>
   <li><i class="t b p"></i><svg><use href="#gear"/></svg><span>Assembly features</span></li>
  </ul>
  <span class="axis">_x</span>
 </div>
 <aside class="side">
  <hr>
  <svg class="s1" viewBox="0 0 30 30"><path d="M0 4h6l14 11L0 25z" fill="#8cc8b8"/><path d="M15 2l2 7 6-4-2 7 7 3-7 2 2 7-6-3-2 7-2-7-6 3 2-7-8-2 8-3-2-7 6 4z" fill="#ccc" stroke="#555" stroke-width="1.200"/><path d="M12 20l7-14" stroke="#111" stroke-width="3"/></svg>
  <svg class="s2" viewBox="0 0 26 26"><path d="M7 12H3v11h20V12h-4" fill="none" stroke="#106878" stroke-width="2.500"/><path d="M13 19V4M9 8l4-5 4 5" fill="none" stroke="#555" stroke-width="4"/><path d="M13 19V4M9 8l4-5 4 5" fill="none" stroke="#f8f000" stroke-width="2.500"/></svg>
  <hr>
  <svg class="s3" viewBox="0 0 26 30"><path d="M6 1l15 15h-7l5 9-4 2-4-9-5 4z" fill="#ffff80" stroke="#202050" stroke-width="1.800"/><path d="M24 27h6l-3 5z"/></svg>
 </aside>
</main>

<footer class="bar row3">
 <div class="grp"><svg><use href="#new"/></svg><svg><use href="#open"/></svg><svg><use href="#save"/></svg><svg><use href="#print"/></svg><svg><use href="#cut"/></svg><svg><use href="#copy"/></svg><svg><use href="#paste"/></svg><span class="drop"><svg><use href="#undo"/></svg></span><span class="drop"><svg><use href="#redo"/></svg></span><svg><use href="#help"/></svg></div>
 <div class="grp"><span class="fx">f<small>(x)</small></span><svg><use href="#bubble"/></svg><svg class="nar"><use href="#chain"/></svg><span class="drop"><svg><use href="#table"/></svg></span><span class="drop"><svg><use href="#lock"/></svg></span><svg><use href="#brace"/></svg></div>
 <div class="grp"><svg><use href="#plane3d"/></svg><svg><use href="#fit"/></svg><svg><use href="#pan"/></svg><svg><use href="#rotate"/></svg><svg><use href="#zin"/></svg><svg><use href="#zout"/></svg><svg><use href="#normal"/></svg><svg><use href="#multi"/></svg><span class="drop"><svg><use href="#c4"/></svg></span><span class="drop box"><svg><use href="#y2"/></svg></span><svg><use href="#hide"/></svg><svg><use href="#swap"/></svg></div>
 <div class="grp"><svg><use href="#flash"/></svg><svg><use href="#stack"/></svg><svg><use href="#flow1"/></svg><svg><use href="#flow2"/></svg><svg><use href="#flow3"/></svg><svg><use href="#flow4"/></svg><svg><use href="#comb"/></svg><span class="drop lit"><svg><use href="#light"/></svg></span></div>
 <div class="grp"><svg><use href="#ruler"/></svg><svg><use href="#caliper"/></svg></div>
 <div class="grp"><svg><use href="#grid"/></svg><svg><use href="#analysis"/></svg><span class="drop box"><svg class="on"><use href="#sketchgray"/></svg></span><span class="drop last"><svg><use href="#prism"/></svg></span><svg><use href="#balldim"/></svg><svg><use href="#dimauto"/></svg><svg><use href="#hand"/></svg></div>
 <div class="logo"><svg viewBox="0 0 40 26"><path d="M9 2q13-3 6 5-3 3-7 4" fill="none" stroke="#e03038" stroke-width="2.200"/><path d="M1 25q6-1 10-3 8-6 2-7-3 0-5 1M9 15L5 24" fill="none" stroke="#402a88" stroke-width="2.200"/><path d="M28 11q-10 0-9 4l5 3q0 5-10 6" fill="none" stroke="#f0a828" stroke-width="2.800"/></svg><span>CATIA</span></div>
</footer>

<div class="status"><span>lect the geometry to analyse</span><div class="cmd"></div>
 <b class="sb"><svg viewBox="0 0 22 18"><path d="M3 3h9v8H3zM2 15h18V4M15 12h2" fill="none" stroke="#fff" stroke-width="2"/><path d="M2 2h9v8H2zM1 14h17V3M14 11h2" fill="none" stroke="#999" stroke-width="1.500"/></svg></b>
 <b class="sb last"><svg viewBox="0 0 22 18"><circle cx="11" cy="8" r="7" fill="none" stroke="#999" stroke-width="2"/><path d="M11 3v2M9 7h2v5M9 12h5M2 16h18" fill="none" stroke="#888" stroke-width="2"/></svg></b>
</div>

<nav class="task">
 <div class="win"><svg viewBox="0 0 24 24"><path d="M0 3l10-1v9H0zM11 2l13-2v11H11zM0 12h10v9L0 20zM11 12h13v12l-13-2z" fill="#fff"/></svg></div>
 <div class="find"><svg viewBox="0 0 20 20"><circle cx="10" cy="7" r="6" fill="none" stroke="#222" stroke-width="1.500"/></svg><span>Type here to search</span></div>
 <div class="sys"><svg viewBox="0 0 20 20"><circle cx="10" cy="10" r="8.500" fill="none" stroke="#fff" stroke-width="2"/></svg><svg viewBox="0 0 22 22"><path d="M1 0v4h12V0M1 19V8h12v11M18 0v3M18 6v12" fill="none" stroke="#fff" stroke-width="1.500"/></svg></div>
 <div class="app"><svg viewBox="0 0 28 28"><circle cx="14" cy="14" r="13.500" fill="#fbc834"/><path d="M14 14L1 18Q-2 8 4 5z" fill="#30a050"/><path d="M2 8q12-16 23-1H13z" fill="#dc4a3c"/><circle cx="14" cy="14" r="6.500" fill="#fff"/><circle cx="14" cy="14" r="5" fill="#4080f0"/></svg><span>Inbox</span></div>
 <div class="app"><svg viewBox="0 0 28 28"><path d="M0 2l17-2v28L0 26z" fill="#0a70c8"/><path d="M17 7h11v16H17z" fill="#fff"/><path d="M17 7l5 6 6-6" fill="none" stroke="#2a80d0" stroke-width="2"/><ellipse cx="8.500" cy="13" rx="4" ry="5" fill="none" stroke="#fff" stroke-width="2.500"/></svg><span>Inbox</span></div>
 <div class="app"><svg viewBox="0 0 28 28"><circle cx="15" cy="5" r="5" fill="#7b83eb"/><circle cx="24.500" cy="6.500" r="3.200" fill="#5059c9"/><path d="M0 6h14v14H0z" fill="#4b53bc"/><path d="M4 10h7" stroke="#fff" stroke-width="2"/></svg><span>Ankur</span></div>
 <div class="app act"><svg viewBox="0 0 30 28"><path d="M1 1h28v27H1z" fill="#111" stroke="#fff" stroke-width="1.500"/><path d="M2 4l15 12-4 12z" fill="#50b8f0"/><path d="M10 9q5-8 16-5-2 6-13 9z" fill="#c05a18"/><path d="M15 9q4-5 8-2-3 3-7 4z" fill="#ffc850"/></svg><span>CATIA</span></div>
 <div class="app f"><svg><use href="#fold"/></svg><span>VPL_VF</span></div>
 <div class="app f"><svg><use href="#fold"/></svg><span>VLSTH</span></div>
 <div class="app f"><svg><use href="#fold"/></svg><span>STYLE</span></div>
 <div class="app f"><svg><use href="#fold"/></svg><span>Downl</span></div>
 <div class="snip"><svg viewBox="0 0 26 26"><ellipse cx="13" cy="9" rx="13" ry="7" transform="rotate(-25 13 9)" fill="#f4f4f4" stroke="#e02020" stroke-width="1.500"/><path d="M12 2l3 14M3 12l18-6" stroke="#888" stroke-width="2"/></svg></div>
 <div class="app ppt"><svg viewBox="0 0 28 28"><path d="M0 2l17-2v28L0 26z" fill="#d04424"/><path d="M17 4h11v20H17z" fill="#d04424"/><path d="M6 20V9h4q4 3 0 6H6M20 9h5" fill="none" stroke="#fff" stroke-width="2.500"/></svg><span>CHMS</span></div>
 <div class="tray"><svg class="up" viewBox="0 0 12 8"><path d="M1 7l5-5 5 5" fill="none" stroke="#fff" stroke-width="1.500"/></svg><svg viewBox="0 0 22 18"><path d="M4 3h16v11H4zM1 3h4v5H1z" fill="none" stroke="#fff" stroke-width="1.300"/></svg><svg viewBox="0 0 22 18"><path d="M1 8h4l4-4v12l-4-4H1zM12 6q2 3 0 7M15 4q4 5 0 11M18 2q5 7 0 14" fill="none" stroke="#fff" stroke-width="1.300"/></svg><span>ENG</span></div>
 <div class="clock">18:39</div>
 <div class="note"><svg viewBox="0 0 20 16"><path d="M1 1h18v13H1z" fill="none" stroke="#fff" stroke-width="1.500"/></svg></div>
</nav>

<section class="msg">
 <div class="mhead"><span>Runtime exception</span><svg viewBox="0 0 14 14"><path d="M1 1l12 12M13 1L1 13" stroke="#777"/></svg></div>
 <div class="mbody"><svg viewBox="0 0 38 38"><circle cx="19" cy="19" r="18.500" fill="#0078d7" stroke="#0a5aa8"/><path d="M19 8v3.500M19 14v16" stroke="#fff" stroke-width="2.600"/></svg><span>Click OK to terminate</span></div>
 <div class="mfoot"><button>OK</button></div>
</section>

<section class="dlg">
 <div class="dhead"><span>Sketch Analysis</span><svg viewBox="0 0 12 12"><path d="M0 6.500h12" stroke="#000"/></svg><svg viewBox="0 0 12 12"><path d="M.5.5h11v11H.5z" fill="none" stroke="#ccc"/></svg><svg viewBox="0 0 12 12"><path d="M0 0l12 12M12 0L0 12" stroke="#000" stroke-width="1.200"/></svg></div>
 <div class="dbody">
  <div class="tabs"><span class="cur">Geometry</span><span>Use-edges</span><span>Diagnostic</span></div>
  <div class="panel">
   <fieldset class="gen"><legend>General Status</legend><div class="field">All check passed</div></fieldset>
   <fieldset class="det"><legend>Detailed Information</legend>
    <div class="list"><div class="tr th"><span>Geometry</span><span>Status</span><span>Comment</span></div><div class="tr pick"><span>Implicit Profile</span><span>Closed</span><span>6 Curve(s)</span></div></div>
   </fieldset>
   <fieldset class="cor"><legend>Corrective Actions</legend>
    <div class="acts">
     <b><svg viewBox="0 0 30 30"><path d="M3 25L14 4M4 19h9M16 27q8 2 10-6" fill="none" stroke="#aaa" stroke-width="1.800" stroke-dasharray="3 2"/><circle cx="20" cy="14" r="6.500" fill="none" stroke="#aaa" stroke-width="1.800" stroke-dasharray="3 2"/></svg></b>
     <b><svg viewBox="0 0 30 30"><path d="M15 8q8 6 4 14-5 5-12 2-6-6 0-13l4-5M6 3h7M11 0l4 3-4 3M12 15v5M9 18h6M26 26V15M23 18l3-4 3 4" fill="none" stroke="#aaa" stroke-width="1.800"/></svg></b>
     <b><svg viewBox="0 0 30 30"><path d="M5 22L17 9h8v5L13 26H6z" fill="#fff6e6" stroke="#aaa" stroke-width="2"/><path d="M14 25l11-11V9L13 21z" fill="#bbb"/></svg></b>
     <b><svg viewBox="0 0 30 30"><path d="M6 2v12M6 6h17M11 3L7 6l4 3M19 3l4 3-4 3M25 9v18M22 12l3-4 3 4M22 24l3 4 3-4M14 26h10" fill="none" stroke="#e8e000" stroke-width="3"/><path d="M6 2v12M6 6h17M11 3L7 6l4 3M19 3l4 3-4 3M25 9v18M22 12l3-4 3 4M22 24l3 4 3-4M14 26h9" fill="none" stroke="#101080" stroke-width="1.800"/><path d="M2 21l6-4v10H2z" fill="#40a0a0" stroke="#107070"/><path d="M1 17l9-2M9 16v12" stroke="#111" stroke-width="2.500"/></svg></b>
     <b><svg viewBox="0 0 30 30"><path d="M9 13L17 1M14 27q2-6 5 0 6 0 8-6" fill="none" stroke="#1010ff" stroke-width="2" stroke-dasharray="4 2"/><circle cx="21" cy="14" r="6" fill="none" stroke="#1020ff" stroke-width="2" stroke-dasharray="4 2"/><circle cx="21" cy="14" r="6" fill="none" stroke="#30e0f8" stroke-width="2" stroke-dasharray="0 4 2 0"/><path d="M2 20l6-4v10H2z" fill="#40a0a0" stroke="#107070"/><path d="M1 16l9-2M9 15v12" stroke="#111" stroke-width="2.500"/></svg></b>
     <b><svg viewBox="0 0 30 30"><path d="M3 9h20M18 4l6 5-6 5M26 21H6M11 16l-6 5 6 5" fill="none" stroke="#999" stroke-width="2"/></svg></b>
    </div>
   </fieldset>
  </div>
  <button class="close">Close</button>
  <div class="globe"></div>
 </div>
</section>
</body>
</html>
```
FILE: styles.css
```css
*{box-sizing:border-box}
body{margin:0;width:1894px;height:989px;overflow:hidden;position:relative;display:flex;flex-direction:column;background:#d0d0e6;font-family:"Open Sans","Noto Sans",sans-serif;font-size:14px;color:#111}
.defs{position:absolute;width:0;height:0}
i,b{font-style:normal;font-weight:400}

/* toolbars */
.tools{height:88px;flex:none;background:linear-gradient(#d0d0e6 0 74px,#a0a0b8 85px,#555 85px,#999 86px,#999 87px,#555 87px)}
.bar{display:grid}
.row1{height:42px;grid-template-columns:748px 250px 462px 128px 1fr}
.row2{height:43px;grid-template-columns:18px 801px 371px 297px 1fr}
.grp{display:flex;align-items:center;position:relative;padding-left:10px}
.grp::before{content:"";position:absolute;left:0;width:3px;border:1px solid #fff;border-right-color:#999;background:#eee}
.row1 .grp::before{top:0;height:15px}
.row2 .grp::before{top:3px;height:20px}
.row3 .grp::before{top:6px;height:20px}
.grp svg{width:26px;height:26px;margin:0 4.5px;flex:none;overflow:visible;filter:drop-shadow(2px 2px 0 rgba(160,160,180,.35))}
.row1 .grp{align-items:flex-start;padding-top:1px}
.row1 .grp:nth-child(2) svg,.row1 .grp:nth-child(3) svg{margin:0 5px}
.row1 .grp:nth-child(3) svg{margin:0 4.7px}
.row1 .grp:nth-child(2){padding-left:14px}
.row2 .grp svg{margin-bottom:2px}
.row2 .grp:nth-child(3) svg{margin-left:4px;margin-right:5px}
.row2 .grp:nth-child(4) svg{margin:0 3.5px 2px 5.5px}
.row2 .grp:nth-child(5){padding-left:7px}
.row2 .grp:nth-child(5) svg{margin:0 6px 2px 4.6px}
.grp svg.on{background:#b8b8c0;outline:2px solid #b8b8c0}
.arr{position:absolute;left:39px;top:27px;border:4px solid transparent;border-top:5px solid #000;border-bottom:0}
.a2{left:112px}.a3{left:149px}.a4{left:187px}
.drop{position:relative;width:38px;flex:none;display:flex}
.drop::after{content:"";position:absolute;left:29px;top:26px;border:4px solid transparent;border-top:5px solid #000;border-bottom:0}
.drop.box::before{content:"";position:absolute;left:27px;top:24px;width:12px;height:9px;background:#fff;z-index:1}
.drop.box::after{z-index:2}
.drop.lit{left:3px}
.drop.last{width:41px}
.row3 .drop.last svg{margin-left:6px}
.props.grp{padding-left:12px;align-items:flex-start;padding-top:7px;gap:3px}
.combo{position:relative;height:30px;background:#fff;border-top:2px solid #8a8a8a;border-left:1px solid #888;border-right:1px solid #aaa;display:flex;align-items:center;flex:none;padding-left:7px;font-size:15px}
.combo::after{content:"";position:absolute;right:8px;top:7px;width:7px;height:7px;border:solid #444;border-width:0 2px 2px 0;transform:rotate(45deg)}
.w81{width:81px}.w54{width:54px}.w51{width:51px}.w82{width:82px}
.off{background:#c8c8c8;color:#777;border-color:#bbb;height:28px;padding-left:5px}
.dim,.off{border-color:#c4c4cc}
.dim::after,.off::after{border-color:#aaa}
.dim::before{content:"";position:absolute;left:4px;top:1px;bottom:2px;width:52px;background:#f0f0f0}
.dim.w51::before{width:22px}
.none{border-color:#888;height:29px;border-bottom:1px solid #999;padding-left:3px;padding-bottom:3px}
.swatch{width:42px;height:20px;background:#8c8c8c;border:1px solid #666;border-right-color:#ccc;border-bottom-color:#ccc}
.line{position:relative;width:47px;height:2px;background:#222;margin-left:1px}
.grp svg.pt{width:14px;height:14px;margin:0 -2px;filter:none;fill:none;stroke:#222;stroke-width:1.3}
.grp svg.lay{width:18px;height:18px;margin:0;filter:none;position:relative}
.grp svg.wide{width:28px;height:28px;margin:0 3px 0 -1px}
.grp svg.wide+.wide{margin-left:2px}

/* viewport */
.work{height:803px;flex:none;display:flex}
.view{position:relative;width:1854px;overflow:hidden;background:linear-gradient(#333366 0,#3c3b6b 30%,#474675 63%,#5a5984 69%,#8685a4 84%,#a9a9bf 100%)}
.scene{position:absolute;left:0;top:0;width:1854px;height:803px}
.tree{position:relative;list-style:none;margin:-17px 0 0;padding:0;font-size:16px;color:#f0f0fa}
.tree li{height:33.3px;display:flex;align-items:center}
.tree i{position:relative;width:23.7px;height:100%;flex:none}
.tree i.v::before,.tree i.t::before,.tree i.l::before{content:"";position:absolute;left:11px;width:2.5px;top:0;bottom:0;background:#eef}
.tree i.l::before{bottom:50%}
.tree i.t::after,.tree i.l::after{content:"";position:absolute;left:12px;top:17px;width:14px;height:2px;background:#eef}
.tree i.b::after{left:5px;top:14px;width:14px;height:4px;background:#000}
.tree i.b{z-index:1;background:linear-gradient(#eef,#eef) 19px 17px/6px 2px no-repeat,linear-gradient(#eef,#eef) 11px 0/2.5px 100% no-repeat}
.tree i.b.l{background:linear-gradient(#eef,#eef) 19px 17px/6px 2px no-repeat,linear-gradient(#eef,#eef) 11px 0/2.5px 50% no-repeat}
.tree i.b::before{left:4px;top:8px;bottom:auto;width:16px;height:16px;border-radius:50%;background:radial-gradient(circle at 45% 35%,#bbb,#777 80%)}
.tree i.b.p::after{height:15px;top:9px;left:5px;width:15px;background:linear-gradient(#000,#000) 1px 5.500px/13px 4px no-repeat,linear-gradient(#000,#000) 5.500px 1px/4px 13px no-repeat}
.tree svg{width:28px;height:28px;margin:0 3px 0 3px;flex:none;z-index:1}
.tree span{height:25px;line-height:25px;background:#333366;border-radius:2px;padding:0 2px 0 1px;white-space:nowrap;letter-spacing:.15px}
.tree .wd{letter-spacing:.34px}
.tree .caps{letter-spacing:.58px}
.tree .c2{letter-spacing:.74px}
.tree .sel{background:#0868ff;border:1px solid #fff;border-width:2px 0 0 2px;line-height:20px;height:24px;padding:0;letter-spacing:.6px;margin:-2px 0 0 -1px;box-shadow:2px 2px 0 #555}
.tree .hot{background:#ff8000;text-decoration:underline;text-underline-offset:3px;line-height:24px}
.axis{position:absolute;left:1836px;top:753px;color:#d8d8e8;font-size:14px}
.side{width:40px;background:linear-gradient(90deg,#fff 0,#f0f0fa 5px,#d0d0e6 10px);display:flex;flex-direction:column;overflow:hidden}
.side hr{margin:6px 0 0 6px;width:20px;height:4px;border:1px solid #fff;border-bottom-color:#999;flex:none;background:#eee}
.side svg{flex:none;overflow:visible}
.s1{width:28px;height:28px;margin:11px 0 0 10px}
.s2{width:26px;height:26px;margin:11px 0 0 12px}
.s2+hr{margin-top:16px}
.s3{width:26px;height:30px;margin:12px 0 0 12px}
.row3{height:47px;flex:none;background:linear-gradient(#ccc 0 1px,#fff 1px 4px,#d4d4e8 14px,#ceced8 28px,#9c9cb4 45px,#444 45px);grid-template-columns:368px 232px 448px 306px 94px 392px 1fr}
.row3 .grp{padding:4px 0 0 9.6px}
.row3 .grp:first-child{padding-left:0}
.row3 .grp:first-child::before{display:none}
.row3 .grp svg.nar{margin:0 .5px}
.fx{width:35px;flex:none;font:italic 24px/26px "Liberation Serif",serif;padding-left:6px;-webkit-text-stroke:.4px #000;white-space:nowrap}
.fx small{font:16px "Liberation Sans",sans-serif;letter-spacing:-.5px}
.logo{display:flex;flex-direction:column}
.logo svg{width:40px;height:26px;margin:2px 0 0 4px}
.logo span{font:italic bold 12.5px "Liberation Sans",sans-serif;color:#402a78;margin:0 0 0 11px;line-height:14px}
.status{height:29px;flex:none;display:flex;align-items:flex-start}
.status span{width:1441px;flex:none;padding-top:5px;letter-spacing:.08px}
.cmd{width:375px;flex:none;height:25px;margin-top:2px;background:#fff;border:2px solid #888;border-right-color:#ccc;border-bottom-color:#aaa}
.sb{width:41px;flex:none;height:26px;margin:2px 0 0 1px;border:1px solid #fff;border-right:2px solid #888;border-bottom:2px solid #888;display:flex;justify-content:center;align-items:center}
.sb.last{border-right:0;width:36px;padding-left:3px}
.sb svg{width:22px;height:18px}

/* task bar */
.task{height:22px;flex:none;overflow:hidden;background:#213740;display:flex;align-items:flex-start;color:#fff}
.task svg{flex:none}
.win{width:41px}
.win svg{width:24px;height:24px;margin:15px 0 0 -3px}
.find{width:430px;height:48px;background:#f2f2f2;border:1px solid #aaa;display:flex;color:#333;font-size:15px}
.find svg{width:20px;height:20px;margin:15px 9px 0 17px}
.find span{padding-top:14px;letter-spacing:.3px}
.sys{width:133px;display:flex;padding:15px 0 0 20px;gap:31px}
.sys svg{width:20px;height:20px}
.app{width:106px;height:44px;display:flex;padding-left:1px;gap:6px;font-size:14px}
.app svg{width:28px;height:28px;margin-top:11px}
.app span{padding-top:15px}
.act{background:#506068;padding-left:8px;width:106px}
.act svg{width:30px}
.app:nth-child(6){width:100px}
.app.f{padding-left:14px;gap:11px}
.app.f svg{width:17px;height:23px;margin-top:13px}
.snip{width:50px;padding-left:12px}
.snip svg{width:26px;height:26px;margin-top:10px}
.ppt{width:110px;padding-left:12px}
.tray{display:flex;width:164px;gap:9px;padding-left:9px}
.tray svg{width:22px;height:18px;margin-top:13px}
.tray .up{width:12px;height:8px;margin:19px 0 0 0}
.tray span{padding-top:15px}
.clock{width:77px;padding-top:4px;font-size:14px;letter-spacing:-.3px}
.note svg{width:21px;height:17px;margin-top:15px}

/* message box */
.msg{position:absolute;left:816px;top:354px;width:250px;height:188px;background:#fff;display:flex;flex-direction:column;box-shadow:0 3px 14px rgba(0,0,0,.45),0 0 1px #333}
.mhead{height:38px;display:flex;justify-content:space-between;padding:10px 14px 0 10px;color:#999;line-height:19px;letter-spacing:.05px}
.mhead svg{width:14px;height:14px;margin-top:2px}
.mbody{flex:1;display:flex;align-items:center;padding:1px 0 0 27px;gap:12px;letter-spacing:-.14px}
.mbody svg{width:39px;height:39px}
.mbody span{padding-top:1px}
.mfoot{height:52px;background:#f0f0f0;display:flex;justify-content:flex-end;padding:14px 20px 0 0}
.mfoot button{width:91px;height:27px;background:#e1e1e1;border:1px solid #adadad;font:14px "Open Sans",sans-serif;padding:0}

/* analysis dialog */
.dlg{position:absolute;left:1155px;top:75px;width:680px;height:796px;border:1px solid #554f55;box-shadow:0 6px 18px rgba(0,0,0,.5);display:flex;flex-direction:column}
.dhead{height:38px;background:#fff;display:flex;align-items:center;padding:0 24px 1px 10px}
.dhead span{flex:1;font-size:14px;letter-spacing:.05px}
.dhead svg{width:12px;height:12px;margin-left:46.500px;overflow:visible}
.dbody{flex:1;position:relative;overflow:hidden;padding:13px 11px 0 12px;background:linear-gradient(#e3d8d6,#ecdcd0 30%,#f6e3c8 60%,#fde6c1 80%)}
.tabs{display:flex;align-items:flex-end;height:30px;gap:1px}
.tabs span{height:27px;line-height:24px;text-align:center;border:2px solid #f8f2f0;border-right:2px solid #333;border-bottom:0;border-radius:4px 0 0 0;margin-bottom:1px;width:95px;padding-right:3px;letter-spacing:.1px}
.tabs .cur{height:31px;width:96px;margin-bottom:-1px;line-height:26px;padding-right:0}
.panel{height:661px;border:2px solid #fbf3ea;border-right:3px solid #444;border-bottom:3px solid #333;padding:0 5px 0 4px}
fieldset{margin:0;min-width:0;border:2px groove #efe9e6;padding:0}
legend{margin-left:6px;padding:0 5px;line-height:20px;height:20px;letter-spacing:.12px}
.gen{height:54px;padding:0 1px;margin-top:3px}
.field{height:26px;margin-top:2px;background:#f0f0f0;border:2px solid #888;border-right-color:#ccc;border-bottom-color:#aaa;line-height:22px;padding-left:4px;color:#222;letter-spacing:.1px}
.det{height:538px;margin-top:-3px;border-bottom:0}
.list{height:510px;margin-top:5px;background:#fff;border:2px solid #8c8c90;padding:1px 0 0 5px}
.tr{display:grid;grid-template-columns:148px 70px 222px;width:440px;align-items:center}
.th{height:28px}
.th span{border-right:1px solid #e0e0e0;height:28px;line-height:27px;padding-left:4px}
.pick{background:#0078d7;color:#fff;height:24px;letter-spacing:.15px}
.pick span{line-height:22px}
.tr span{padding-left:3px}
.tr span+span{padding-left:8px}
.cor{height:62px;margin-top:-1px}
.acts{display:flex;margin-top:2px}
.acts b{width:35px;height:36px;border:2px solid #fff7ea;border-right-color:#777;border-bottom-color:#777;display:flex;align-items:center;justify-content:center}
.acts svg{width:29px;height:29px;margin-left:-1px}
.close{position:absolute;left:594px;top:721px;width:74px;height:26px;background:#d0d0e6;border:2px solid #f4f4ff;border-right:3px solid #777799;border-bottom:3px solid #777799;font:14px "Open Sans",sans-serif;padding:0}
.globe{position:absolute;left:-36px;top:733px;width:86px;height:64px;border-radius:50%;background:radial-gradient(ellipse at 62% 8%,#d8f0f8 0 4%,#58a0c0 20%,#507888 32%,#3a3a3a 52%);box-shadow:2px -6px 16px 0 #f8c458}
```
